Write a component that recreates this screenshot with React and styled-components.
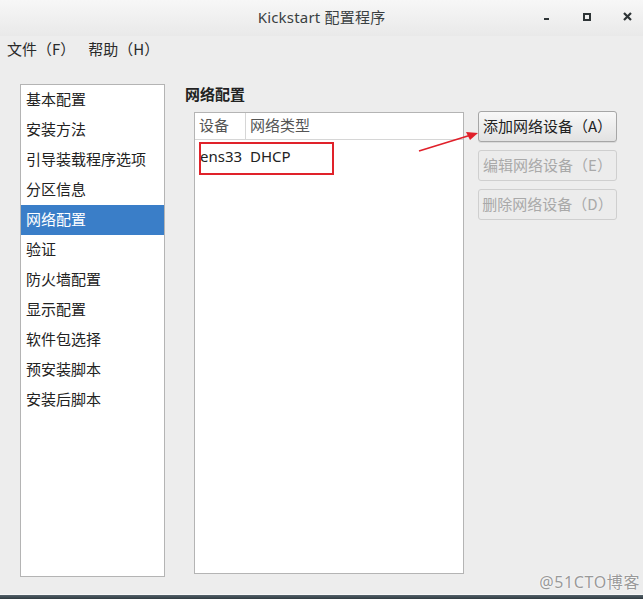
import React from "react";
import styled, { createGlobalStyle } from "styled-components";

const Global = createGlobalStyle`
  html, body { margin: 0; padding: 0; background: #ededed; }
  body { font-family: "Noto Sans", "Noto Sans CJK SC", sans-serif; }
  *, *::before, *::after { box-sizing: border-box; }
`;

const Win = styled.div`
  position: relative;
  width: 643px;
  height: 599px;
  background: #ededed;
  display: flex;
  flex-direction: column;
  overflow: hidden;
  font-family: "Noto Sans", "Noto Sans CJK SC", sans-serif;
  color: #1e1e1e;
`;

const TitleBar = styled.div`
  height: 36px;
  flex: none;
  display: grid;
  grid-template-columns: 1fr auto 1fr;
  align-items: center;
  padding-bottom: 3px;
  background: linear-gradient(#f7f7f7, #e9e9e9);
`;

const Title = styled.div`
  grid-column: 2;
  font-size: 15px;
  color: #3a3f42;
  letter-spacing: 0.2px;
`;

const WinButtons = styled.div`
  grid-column: 3;
  justify-self: end;
  display: flex;
  align-items: center;
  gap: 8px;
`;

const WinBtn = styled.div`
  width: 32px;
  height: 20px;
  display: flex;
  align-items: center;
  justify-content: center;
  color: #2e3436;
`;

const MenuBar = styled.div`
  height: 27px;
  flex: none;
  display: flex;
  align-items: center;
  padding-left: 7px;
  padding-bottom: 2px;
  gap: 13px;
  font-size: 15px;
  font-family: "Noto Sans CJK SC", sans-serif;
  color: #2a2a2a;
`;

const MenuItem = styled.span``;

const Content = styled.div`
  flex: none;
  margin-top: 21px;
  display: flex;
  align-items: flex-start;
  padding-left: 20px;
`;

const SideList = styled.div`
  width: 145px;
  height: 493px;
  border: 1px solid #b4b4b4;
  background: #fff;
  display: flex;
  flex-direction: column;
`;

const SideItem = styled.div`
  height: 30px;
  flex: none;
  display: flex;
  align-items: center;
  padding-left: 5px;
  padding-bottom: 3px;
  font-size: 15px;
  font-family: "Noto Sans CJK SC", sans-serif;
  color: ${(p) => (p.$active ? "#ffffff" : "#222")};
  background: ${(p) => (p.$active ? "#3a7ec8" : "transparent")};
`;

const Main = styled.div`
  margin-left: 20px;
  display: flex;
  flex-direction: column;
`;

const Heading = styled.div`
  font-size: 15px;
  font-weight: bold;
  font-family: "Noto Sans CJK SC", sans-serif;
  height: 28px;
  line-height: 20px;
  color: #222;
`;

const Row = styled.div`
  display: flex;
  align-items: flex-start;
  gap: 14px;
  padding-left: 9px;
`;

const Table = styled.div`
  width: 270px;
  height: 462px;
  border: 1px solid #b4b4b4;
  background: #fff;
  display: flex;
  flex-direction: column;
`;

const HeaderRow = styled.div`
  height: 27px;
  flex: none;
  display: flex;
  border-bottom: 1px solid #d6d6d6;
  font-size: 15px;
  font-family: "Noto Sans CJK SC", sans-serif;
  color: #555;
`;

const HeadCell = styled.div`
  display: flex;
  align-items: center;
  padding-bottom: 3px;
  padding-left: ${(p) => p.$pl || 4}px;
  width: ${(p) => (p.$w ? p.$w + "px" : "auto")};
  border-right: ${(p) => (p.$sep ? "1px solid #d6d6d6" : "none")};
`;

const DataRow = styled.div`
  position: relative;
  height: 34px;
  flex: none;
  display: flex;
  align-items: center;
  padding-bottom: 2px;
  font-size: 15px;
  font-family: "Noto Sans", "Noto Sans CJK SC", sans-serif;
  color: #222;
`;

const DataCell = styled.div`
  width: ${(p) => (p.$w ? p.$w + "px" : "auto")};
  padding-left: ${(p) => p.$pl || 0}px;
`;

const Highlight = styled.div`
  position: absolute;
  left: 4px;
  top: 2px;
  width: 135px;
  height: 33px;
  border: 2px solid #e0222a;
`;

const Buttons = styled.div`
  margin-top: -1px;
  display: flex;
  flex-direction: column;
  gap: 8px;
`;

const Button = styled.div`
  width: 139px;
  height: 31px;
  border: 1px solid ${(p) => (p.$disabled ? "#cfcfcf" : "#a6a6a6")};
  border-radius: 3px;
  background: ${(p) =>
    p.$disabled ? "#ececec" : "linear-gradient(#f8f8f8, #e2e2e2)"};
  box-shadow: ${(p) => (p.$disabled ? "none" : "0 1px 0 rgba(0,0,0,0.08)")};
  display: flex;
  align-items: center;
  justify-content: center;
  padding-bottom: 2px;
  font-size: 15px;
  font-family: "Noto Sans CJK SC", sans-serif;
  color: ${(p) => (p.$disabled ? "#a9a9a9" : "#222")};
`;

const Spacer = styled.div`
  flex: 1;
`;

const BottomEdge = styled.div`
  height: 5px;
  flex: none;
  border-top: 1px solid #f7f7f7;
  background: linear-gradient(#55626a, #2f3a40);
`;

const Arrow = styled.svg`
  position: absolute;
  left: 415px;
  top: 126px;
  overflow: visible;
`;

const Watermark = styled.div`
  position: absolute;
  right: 3px;
  bottom: 6px;
  font-size: 16px;
  letter-spacing: 0.6px;
  font-family: "Noto Sans", "Noto Sans CJK SC", sans-serif;
  color: #999;
  text-shadow: 0 0 2px #fff, 0 0 1px #fff;
`;

const side = [
  "基本配置",
  "安装方法",
  "引导装载程序选项",
  "分区信息",
  "网络配置",
  "验证",
  "防火墙配置",
  "显示配置",
  "软件包选择",
  "预安装脚本",
  "安装后脚本",
];

export default function App() {
  return (
    <Win>
      <Global />
      <TitleBar>
        <Title>Kickstart 配置程序</Title>
        <WinButtons>
          <WinBtn>
            <svg width="8" height="8" viewBox="0 0 8 8">
              <rect x="1" y="5" width="5" height="2" fill="#2e3436" />
            </svg>
          </WinBtn>
          <WinBtn>
            <svg width="8" height="8" viewBox="0 0 8 8">
              <rect x="1" y="1" width="6" height="6" fill="none" stroke="#2e3436" strokeWidth="2" />
            </svg>
          </WinBtn>
          <WinBtn>
            <svg width="9" height="9" viewBox="0 0 9 9">
              <path d="M1 1 L8 8 M8 1 L1 8" stroke="#2e3436" strokeWidth="2.2" />
            </svg>
          </WinBtn>
        </WinButtons>
      </TitleBar>
      <MenuBar>
        <MenuItem>文件（F）</MenuItem>
        <MenuItem>帮助（H）</MenuItem>
      </MenuBar>
      <Content>
        <SideList>
          {side.map((s) => (
            <SideItem key={s} $active={s === "网络配置"}>
              {s}
            </SideItem>
          ))}
        </SideList>
        <Main>
          <Heading>网络配置</Heading>
          <Row>
            <Table>
              <HeaderRow>
                <HeadCell $w={51} $sep>设备</HeadCell>
                <HeadCell $pl={4}>网络类型</HeadCell>
              </HeaderRow>
              <DataRow>
                <Highlight />
                <DataCell $w={55} $pl={5}>ens33</DataCell>
                <DataCell>DHCP</DataCell>
              </DataRow>
            </Table>
            <Buttons>
              <Button>添加网络设备（A）</Button>
              <Button $disabled>编辑网络设备（E）</Button>
              <Button $disabled>删除网络设备（D）</Button>
            </Buttons>
          </Row>
        </Main>
      </Content>
      <Spacer />
      <BottomEdge />
      <Arrow width="70" height="30" viewBox="0 0 70 30">
        <path d="M4 25 L56 9" stroke="#e0202a" strokeWidth="1.6" fill="none" />
        <path d="M63 7 L51 6 L55 14 Z" fill="#e0202a" />
      </Arrow>
      <Watermark>@51CTO博客</Watermark>
    </Win>
  );
}
